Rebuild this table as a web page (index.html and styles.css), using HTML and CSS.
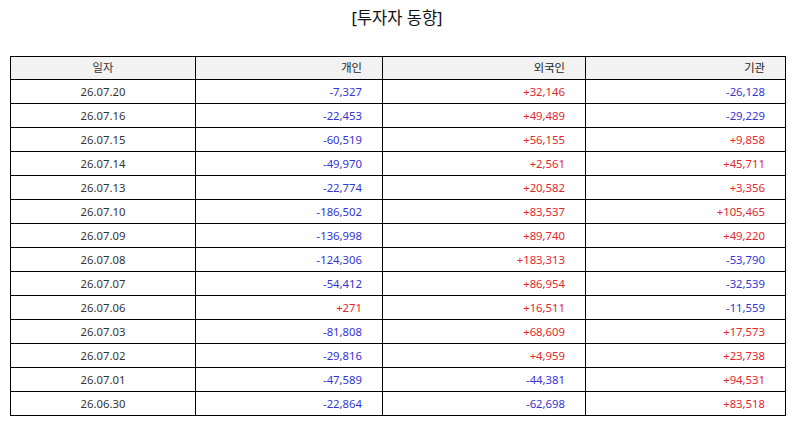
FILE: index.html
```html
<!DOCTYPE html>
<html lang="ko">
<head>
<meta charset="utf-8">
<link rel="stylesheet" href="styles.css">
</head>
<body>
<h1 class="title">[투자자 동향]</h1>
<table class="grid">
  <colgroup>
    <col class="c-date"><col class="c-ind"><col class="c-for"><col class="c-inst">
  </colgroup>
  <thead>
    <tr><th class="center">일자</th><th>개인</th><th>외국인</th><th>기관</th></tr>
  </thead>
  <tbody>
    <tr><td class="center">26.07.20</td><td class="neg">-7,327</td><td class="pos">+32,146</td><td class="neg">-26,128</td></tr>
    <tr><td class="center">26.07.16</td><td class="neg">-22,453</td><td class="pos">+49,489</td><td class="neg">-29,229</td></tr>
    <tr><td class="center">26.07.15</td><td class="neg">-60,519</td><td class="pos">+56,155</td><td class="pos">+9,858</td></tr>
    <tr><td class="center">26.07.14</td><td class="neg">-49,970</td><td class="pos">+2,561</td><td class="pos">+45,711</td></tr>
    <tr><td class="center">26.07.13</td><td class="neg">-22,774</td><td class="pos">+20,582</td><td class="pos">+3,356</td></tr>
    <tr><td class="center">26.07.10</td><td class="neg">-186,502</td><td class="pos">+83,537</td><td class="pos">+105,465</td></tr>
    <tr><td class="center">26.07.09</td><td class="neg">-136,998</td><td class="pos">+89,740</td><td class="pos">+49,220</td></tr>
    <tr><td class="center">26.07.08</td><td class="neg">-124,306</td><td class="pos">+183,313</td><td class="neg">-53,790</td></tr>
    <tr><td class="center">26.07.07</td><td class="neg">-54,412</td><td class="pos">+86,954</td><td class="neg">-32,539</td></tr>
    <tr><td class="center">26.07.06</td><td class="pos">+271</td><td class="pos">+16,511</td><td class="neg">-11,559</td></tr>
    <tr><td class="center">26.07.03</td><td class="neg">-81,808</td><td class="pos">+68,609</td><td class="pos">+17,573</td></tr>
    <tr><td class="center">26.07.02</td><td class="neg">-29,816</td><td class="pos">+4,959</td><td class="pos">+23,738</td></tr>
    <tr><td class="center">26.07.01</td><td class="neg">-47,589</td><td class="neg">-44,381</td><td class="pos">+94,531</td></tr>
    <tr><td class="center">26.06.30</td><td class="neg">-22,864</td><td class="neg">-62,698</td><td class="pos">+83,518</td></tr>
  </tbody>
</table>
</body>
</html>
```
FILE: styles.css
```css
html, body {
  margin: 0;
  padding: 0;
  background: #ffffff;
}
body {
  padding: 6px 10px 0 10px;
  font-family: "Noto Sans", "Noto Sans CJK KR", sans-serif;
  color: #222;
}
.title {
  margin: 0 0 26px 0;
  text-align: center;
  font-size: 16.5px;
  font-weight: normal;
  line-height: 24px;
  color: #111;
}
.grid {
  border-collapse: collapse;
  table-layout: fixed;
  width: 775px;
  font-size: 11.3px;
}
.c-date { width: 185px; }
.c-ind { width: 187px; }
.c-for { width: 203px; }
.c-inst { width: 200px; }
.grid th, .grid td {
  border: 1px solid #000;
  padding: 0 20px 0 4px;
  text-align: right;
  height: 23px;
  line-height: 14px;
  white-space: nowrap;
}
.grid th {
  background: #f2f2f2;
  font-weight: normal;
  color: #222;
  height: 22px;
}
.grid .center {
  text-align: center;
  padding: 0 4px;
  color: #333;
}
.neg { color: #3434d2; }
.pos { color: #e3262d; }
```
